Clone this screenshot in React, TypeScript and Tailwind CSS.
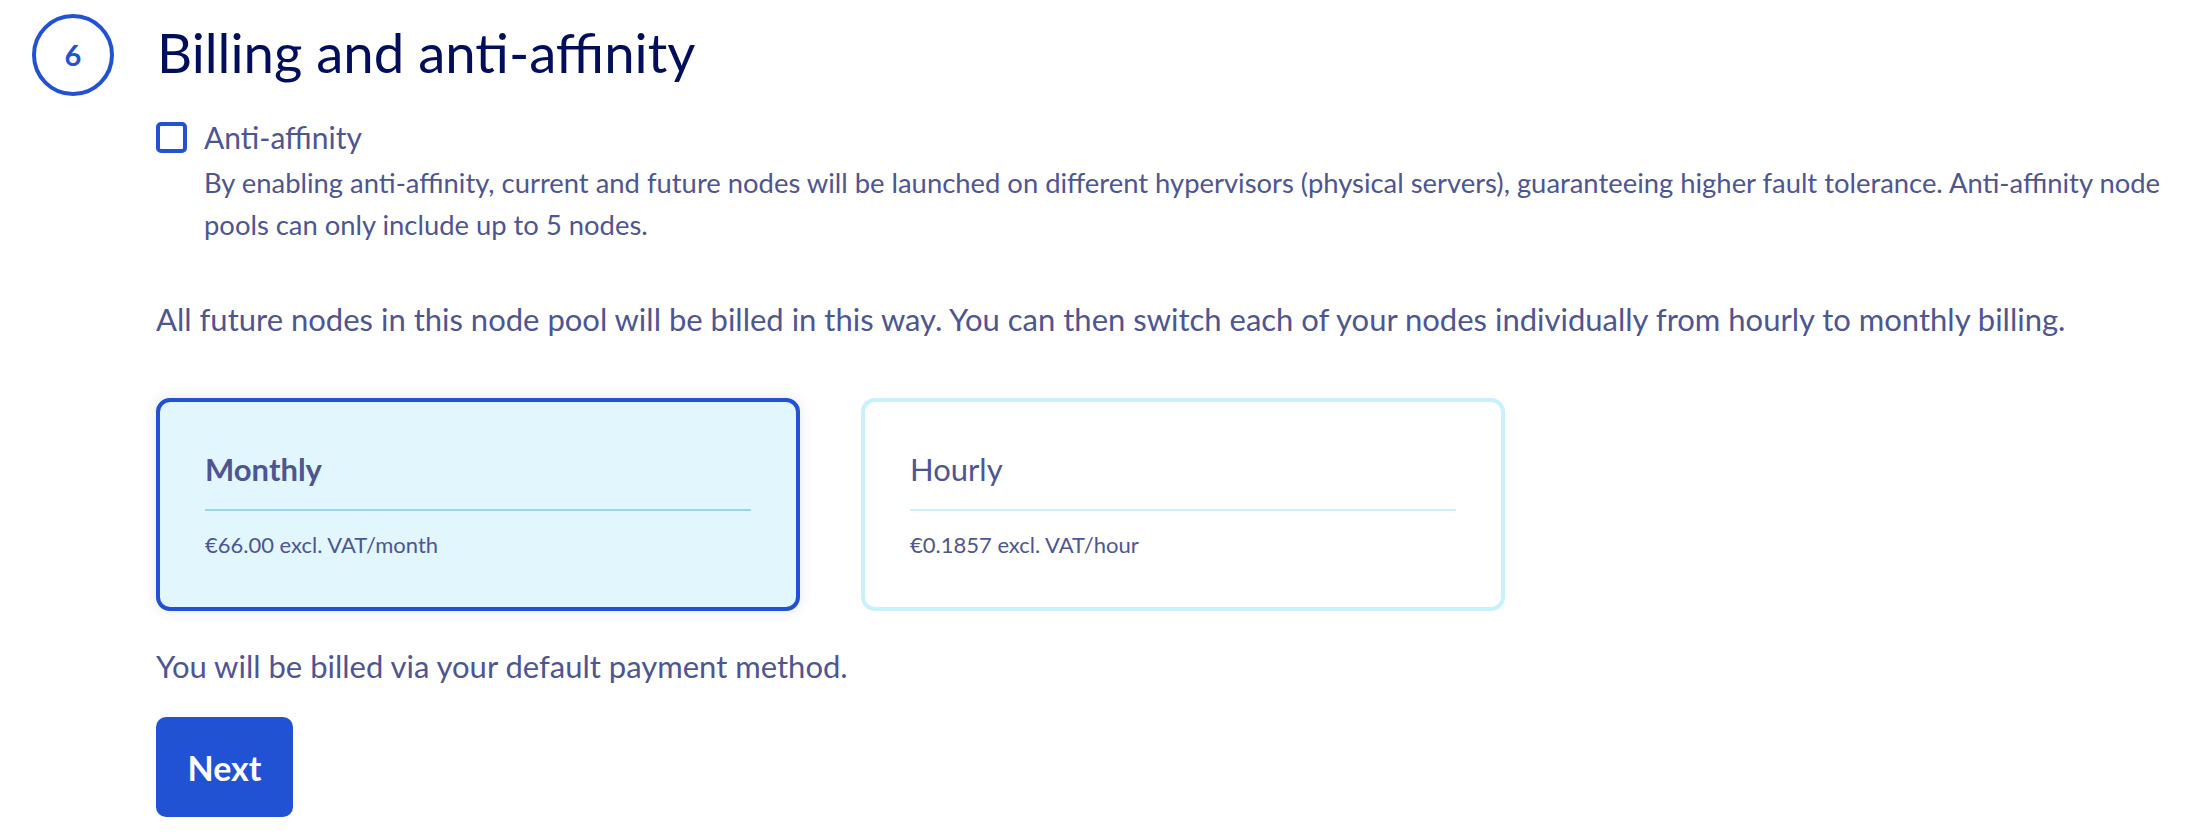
import { useState } from 'react';
import clsx from 'clsx';

type Plan = 'monthly' | 'hourly';

const PLANS: { id: Plan; label: string; price: string }[] = [
  { id: 'monthly', label: 'Monthly', price: '€66.00 excl. VAT/month' },
  { id: 'hourly', label: 'Hourly', price: '€0.1857 excl. VAT/hour' },
];

export default function App() {
  const [plan, setPlan] = useState<Plan>('monthly');
  const [antiAffinity, setAntiAffinity] = useState(false);

  return (
    <div className="w-full h-[836px] bg-white text-[#4d5592] font-['Lato','Noto_Sans',sans-serif]">
      <div className="flex items-center pl-[32px] pt-[14px]">
        <div className="w-[82px] h-[82px] rounded-full border-4 border-[#2152d3] flex items-center justify-center text-[#2152d3] text-[29px] font-bold">
          6
        </div>
        <h1 className="ml-[43px] pb-[6px] text-[54.5px] leading-[60px] text-[#000e5c]">Billing and anti-affinity</h1>
      </div>

      <div className="pl-[156px]">
        <label className="mt-[26px] flex items-center cursor-pointer">
          <input
            type="checkbox"
            checked={antiAffinity}
            onChange={e => setAntiAffinity(e.target.checked)}
            className="sr-only"
          />
          <span
            className={clsx(
              'w-[31px] h-[31px] shrink-0 rounded-[5px] border-4 border-[#2152d3]',
              antiAffinity ? 'bg-[#2152d3]' : 'bg-white',
            )}
          />
          <span className="ml-[17px] text-[30px] leading-[31px]">Anti-affinity</span>
        </label>
        <p className="mt-[9px] ml-[48px] text-[27.4px] leading-[42px] whitespace-nowrap">
          By enabling anti-affinity, current and future nodes will be launched on different hypervisors (physical servers), guaranteeing higher fault tolerance. Anti-affinity node
          <br />
          pools can only include up to 5 nodes.
        </p>

        <p className="mt-[53px] text-[31px] leading-[40px] whitespace-nowrap">
          All future nodes in this node pool will be billed in this way. You can then switch each of your nodes individually from hourly to monthly billing.
        </p>

        <div className="mt-[59px] flex gap-[61px]">
          {PLANS.map(p => {
            const selected = plan === p.id;
            return (
              <button
                key={p.id}
                type="button"
                onClick={() => setPlan(p.id)}
                className={clsx(
                  'w-[644px] h-[213px] rounded-[14px] border-4 px-[45px] pt-[47px] flex flex-col justify-start text-left',
                  selected
                    ? 'bg-[#e2f6fd] border-[#2152d3] shadow-[0_0_14px_rgba(40,50,120,0.12)]'
                    : 'bg-white border-[#c9f1fc]',
                )}
              >
                <div className={clsx('text-[31px] leading-[40px]', selected && 'font-bold')}>{p.label}</div>
                <div className={clsx('mt-[20px] h-[2px] w-full', selected ? 'bg-[#94d5f5]' : 'bg-[#c9f1fc]')} />
                <div className="mt-[19px] text-[22px] leading-[30px]">{p.price}</div>
              </button>
            );
          })}
        </div>

        <p className="mt-[35px] text-[31px] leading-[40px]">You will be billed via your default payment method.</p>

        <button
          type="button"
          className="mt-[31px] w-[137px] h-[100px] rounded-[10px] bg-[#2152d3] text-white text-[34px] font-bold"
        >
          Next
        </button>
      </div>
    </div>
  );
}
